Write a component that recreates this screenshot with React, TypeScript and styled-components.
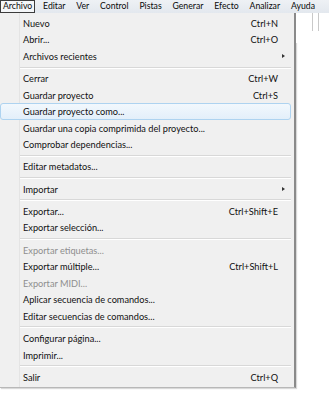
import styled, { createGlobalStyle } from "styled-components";

const GlobalStyle = createGlobalStyle`
  html, body {
    margin: 0;
    padding: 0;
    background: #ffffff;
  }
  body {
    font-family: Lato, "Noto Sans", sans-serif;
    font-size: 9.2px;
    color: #111;
  }
`;

const Screen = styled.div`
  width: 329px;
  height: 395px;
  display: flex;
  flex-direction: column;
  overflow: hidden;
  background: #ffffff;
`;

const MenuBar = styled.div`
  height: 13px;
  display: flex;
  align-items: center;
  background: linear-gradient(#eef1f5, #e3e8ee);
  box-sizing: border-box;
`;

const BarItems = styled.div`
  width: 318px;
  display: flex;
  align-items: center;
  justify-content: space-between;
`;

const BarItem = styled.div<{ $open?: boolean }>`
  height: 13px;
  box-sizing: border-box;
  display: flex;
  align-items: center;
  padding: 0 2px;
  line-height: 1;
  font-size: 8.7px;
  color: #0a0a0a;
  border: 1px solid ${({ $open }) => ($open ? "#3c3c3c" : "transparent")};
  background: ${({ $open }) => ($open ? "#f4f6f8" : "transparent")};
`;

const Body = styled.div`
  flex: 1;
  display: flex;
  align-items: flex-start;
`;

const Dropdown = styled.div`
  width: 296px;
  box-sizing: border-box;
  background: #f0f0f0;
  border-right: 2px solid #8a8a8a;
  border-bottom: 1px solid #b8b8b8;
  padding: 2px 3px 1px 0;
  display: flex;
  flex-direction: column;
  position: relative;
  box-shadow: 1px 1px 1px rgba(0, 0, 0, 0.15);
`;

const Gutter = styled.div`
  position: absolute;
  left: 19px;
  top: 0;
  bottom: 0;
  width: 1px;
  background: #e4e4e4;
`;

const Row = styled.div<{ $hover?: boolean; $disabled?: boolean }>`
  height: 16.5px;
  box-sizing: border-box;
  display: flex;
  align-items: center;
  padding-left: 23px;
  padding-right: 11px;
  position: relative;
  color: ${({ $disabled }) => ($disabled ? "#8e8e8e" : "#111")};
  border: 1px solid ${({ $hover }) => ($hover ? "#aed3f0" : "transparent")};
  border-radius: 3px;
  background: ${({ $hover }) =>
    $hover ? "linear-gradient(#f2f8fd, #e3effa)" : "transparent"};
  white-space: nowrap;
`;

const Label = styled.span`
  flex: 1;
  margin-left: -1px;
`;

const Shortcut = styled.span`
  margin-right: 1px;
`;

const Arrow = styled.span`
  width: 0;
  height: 0;
  border-top: 2.5px solid transparent;
  border-bottom: 2.5px solid transparent;
  border-left: 3px solid #333;
  margin-right: -6px;
`;

const Separator = styled.div`
  height: 1px;
  margin: 2px 0 1.8px 20px;
  background: #d8d8d8;
  border-bottom: 1px solid #ffffff;
`;

const Backdrop = styled.div`
  flex: 1;
  height: 30px;
  position: relative;
  background: #ffffff;
`;

const GridLine = styled.div<{ $x: number }>`
  position: absolute;
  top: 0;
  left: ${({ $x }) => $x}px;
  width: 1px;
  height: 18px;
  background: #c9c9c9;
`;

type Item =
  | { sep: true }
  | { label: string; key?: string; sub?: boolean; off?: boolean; hover?: boolean };

const items: Item[] = [
  { label: "Nuevo", key: "Ctrl+N" },
  { label: "Abrir...", key: "Ctrl+O" },
  { label: "Archivos recientes", sub: true },
  { sep: true },
  { label: "Cerrar", key: "Ctrl+W" },
  { label: "Guardar proyecto", key: "Ctrl+S" },
  { label: "Guardar proyecto como...", hover: true },
  { label: "Guardar una copia comprimida del proyecto..." },
  { label: "Comprobar dependencias..." },
  { sep: true },
  { label: "Editar metadatos..." },
  { sep: true },
  { label: "Importar", sub: true },
  { sep: true },
  { label: "Exportar...", key: "Ctrl+Shift+E" },
  { label: "Exportar selección..." },
  { sep: true },
  { label: "Exportar etiquetas...", off: true },
  { label: "Exportar múltiple...", key: "Ctrl+Shift+L" },
  { label: "Exportar MIDI...", off: true },
  { label: "Aplicar secuencia de comandos..." },
  { label: "Editar secuencias de comandos..." },
  { sep: true },
  { label: "Configurar página..." },
  { label: "Imprimir..." },
  { sep: true },
  { label: "Salir", key: "Ctrl+Q" },
];

const menus = ["Archivo", "Editar", "Ver", "Control", "Pistas", "Generar", "Efecto", "Analizar", "Ayuda"];

export default function App() {
  return (
    <Screen>
      <GlobalStyle />
      <MenuBar>
        <BarItems>
          {menus.map((m, i) => (
            <BarItem key={m} $open={i === 0}>
              {m}
            </BarItem>
          ))}
        </BarItems>
      </MenuBar>
      <Body>
        <Dropdown>
          <Gutter />
          {items.map((it, i) =>
            "sep" in it ? (
              <Separator key={i} />
            ) : (
              <Row key={i} $hover={it.hover} $disabled={it.off}>
                <Label>{it.label}</Label>
                {it.key && <Shortcut>{it.key}</Shortcut>}
                {it.sub && <Arrow />}
              </Row>
            )
          )}
        </Dropdown>
        <Backdrop>
          <GridLine $x={16} />
          <GridLine $x={22} />
        </Backdrop>
      </Body>
    </Screen>
  );
}
